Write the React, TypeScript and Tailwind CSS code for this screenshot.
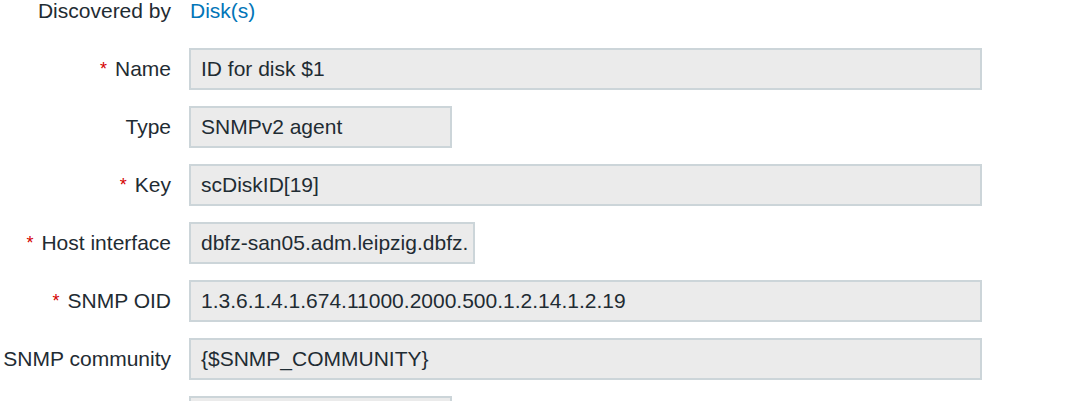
import React from "react"

interface Field {
  label: string
  value: string
  required?: boolean
  width: string
}

const fields: Field[] = [
  { label: "Name", value: "ID for disk $1", required: true, width: "w-[793px]" },
  { label: "Type", value: "SNMPv2 agent", width: "w-[263px]" },
  { label: "Key", value: "scDiskID[19]", required: true, width: "w-[793px]" },
  { label: "Host interface", value: "dbfz-san05.adm.leipzig.dbfz.", required: true, width: "w-[286px]" },
  { label: "SNMP OID", value: "1.3.6.1.4.1.674.11000.2000.500.1.2.14.1.2.19", required: true, width: "w-[793px]" },
  { label: "SNMP community", value: "{$SNMP_COMMUNITY}", width: "w-[793px]" },
  { label: "", value: "", width: "w-[263px]" },
]

export default function App() {
  return (
    <div className="h-[401px] w-[1075px] overflow-hidden bg-white text-[21px] leading-[24px] text-[#1f2c33] font-['Liberation_Sans',Arial,sans-serif]">
      <div className="flex h-[22px] items-center mb-[26px]">
        <div className="w-[171px] shrink-0 text-right whitespace-nowrap">Discovered by</div>
        <a className="ml-[19px] text-[#0275b8]">Disk(s)</a>
      </div>
      {fields.map((f, i) => (
        <div key={i} className="flex h-[42px] items-center mb-[16px]">
          <div className="w-[171px] shrink-0 text-right whitespace-nowrap">
            {f.required && <span className="text-[#d40000] text-[18px] mr-[8px] align-top">*</span>}
            {f.label}
          </div>
          <div
            className={`ml-[18px] h-[42px] ${f.width} shrink-0 overflow-hidden whitespace-nowrap border-2 border-[#ccd5d9] bg-[#ebebeb] pl-[10px] flex items-center`}
          >
            {f.value}
          </div>
        </div>
      ))}
    </div>
  )
}
